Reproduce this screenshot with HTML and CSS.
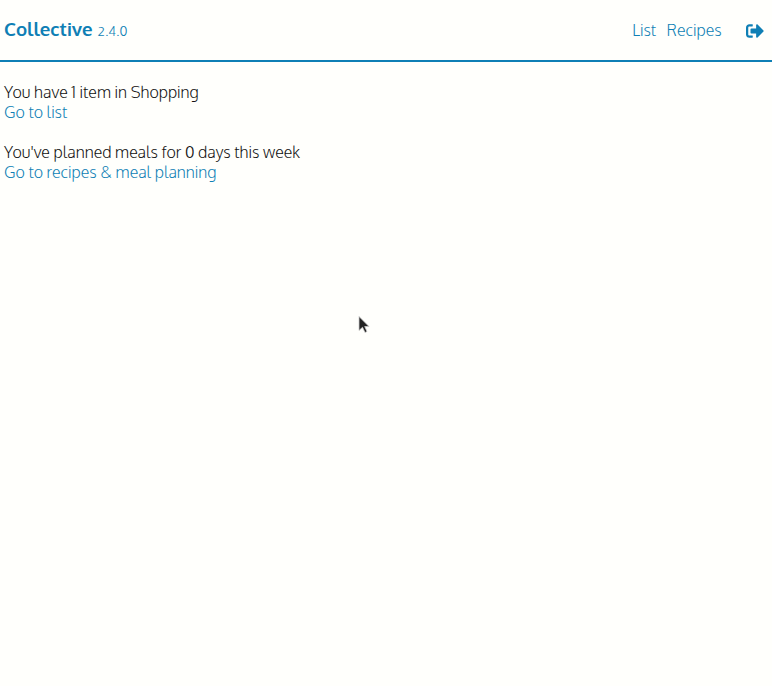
FILE: index.html
```html
<!DOCTYPE html>
<html lang="en">
<head>
<meta charset="utf-8">
<title>Collective</title>
<link rel="stylesheet" href="styles.css">
</head>
<body>
<header class="header">
  <div class="brand"><span class="name">Collective</span><span class="version">2.4.0</span></div>
  <nav class="nav">
    <a class="nav-list" href="#">List</a>
    <a class="nav-recipes" href="#">Recipes</a>
    <a class="logout" href="#" aria-label="Log out"><svg viewBox="0 0 512 512" width="18" height="18"><path fill="currentColor" d="M497 273L329 441c-15 15-41 4.500-41-17v-96H152c-13.300 0-24-10.700-24-24v-96c0-13.300 10.700-24 24-24h136V88c0-21.400 25.900-32 41-17l168 168c9.300 9.400 9.300 24.600 0 34zM192 436v-40c0-6.600-5.400-12-12-12H96c-17.700 0-32-14.300-32-32V160c0-17.700 14.300-32 32-32h84c6.600 0 12-5.400 12-12V76c0-6.600-5.400-12-12-12H96c-53 0-96 43-96 96v192c0 53 43 96 96 96h84c6.600 0 12-5.400 12-12z"/></svg></a>
  </nav>
</header>
<main class="content">
  <section class="summary">
    <p>You have 1 item in Shopping</p>
    <p><a href="#">Go to list</a></p>
  </section>
  <section class="summary">
    <p>You've planned meals for 0 days this week</p>
    <p><a href="#">Go to recipes &amp; meal planning</a></p>
  </section>
</main>
<svg class="cursor" viewBox="0 0 12 19" width="12" height="19"><path d="M1 1.500v14l3.500-3.200 2.500 5.200 2-1-2.300-5H11z" fill="#222" stroke="#ccc" stroke-width=".8"/></svg>
</body>
</html>
```
FILE: styles.css
```css
* { box-sizing: border-box; }
body {
  margin: 0;
  min-height: 686px;
  background: #fffffc;
  color: #111;
  font: 300 16px/20px Oxygen, "Open Sans", "Noto Sans", sans-serif;
}
a { color: #0f7fb5; text-decoration: none; }
p { margin: 0; white-space: nowrap; }
.header {
  height: 62px;
  padding: 0 8px 0 4px;
  border-bottom: 2px solid #0f7fb5;
  display: flex;
  justify-content: space-between;
  align-items: center;
}
.brand { display: flex; align-items: baseline; color: #0f7fb5; }
.name { font-size: 18.720px; font-weight: 700; width: 93.500px; }
.version { font-size: 13.330px; }
.nav { display: flex; align-items: center; }
.nav-list { width: 34.400px; }
.nav-recipes { width: 79.400px; }
.logout { display: flex; padding-top: 2px; }
.content { padding: 20px 4px; }
.summary { margin-bottom: 20px; }
.cursor { position: absolute; left: 358px; top: 315px; }
```
